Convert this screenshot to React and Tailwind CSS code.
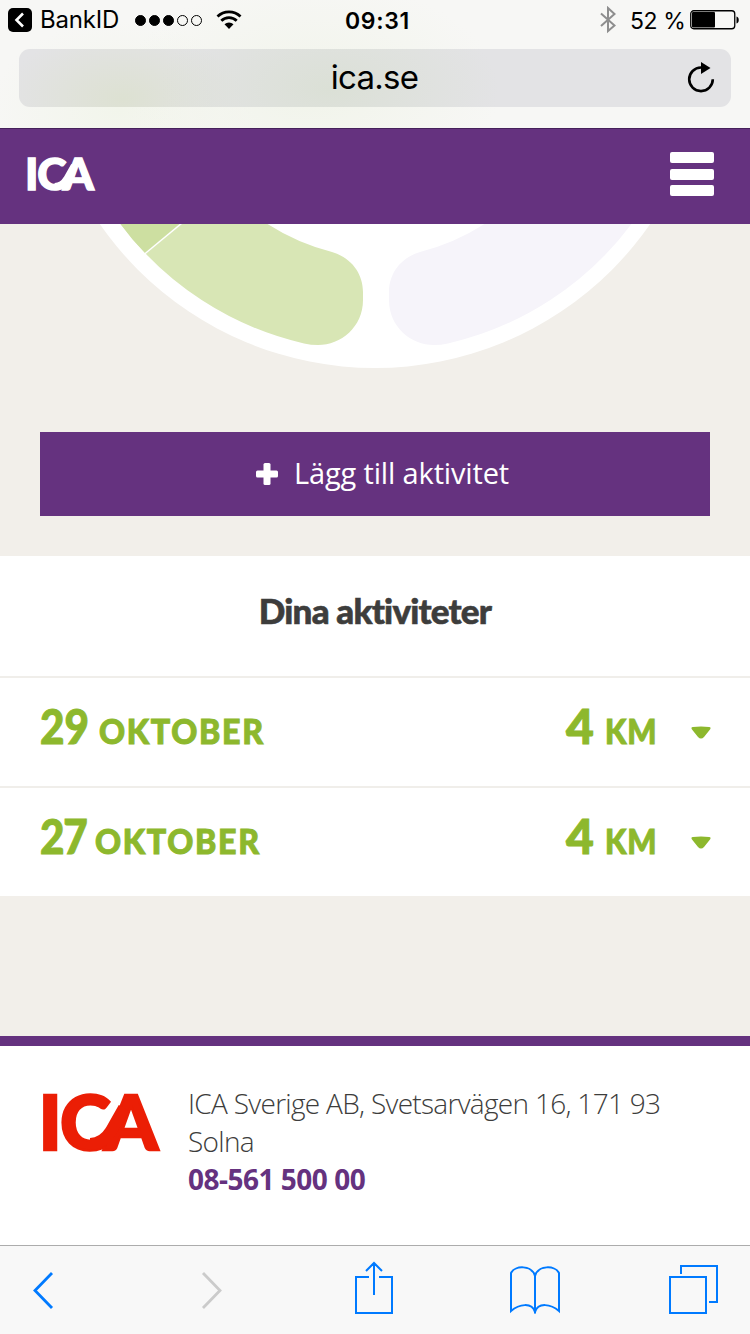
import { clsx } from "clsx"

const activities = [
  { id: 1, day: "29", month: "OKTOBER", distance: "4", unit: "KM" },
  { id: 2, day: "27", month: "OKTOBER", distance: "4", unit: "KM" },
]

export default function App() {
  return (
    <div className="flex h-[1334px] w-[750px] flex-col overflow-hidden bg-[#f2efea] font-['Open_Sans',sans-serif]">
      <BrowserTop />
      <SiteHeader />
      <main className="flex flex-1 flex-col">
        <ProgressRing />
        <div className="px-10 pt-16 pb-10">
          <button className="flex h-[84px] w-full items-center justify-center gap-4 bg-[#65327f] pl-[15px] text-white">
            <svg width="22" height="22" viewBox="0 0 22 22" fill="currentColor">
              <rect x="7.500" y="0" width="7" height="22" rx="1.500" />
              <rect x="0" y="7.500" width="22" height="7" rx="1.500" />
            </svg>
            <span className="pb-[3px] text-[29px] leading-none tracking-[-0.15px]">Lägg till aktivitet</span>
          </button>
        </div>
        <section className="bg-white">
          <h2 className="flex h-[120px] items-center justify-center pb-3 font-[Lato] text-[35px] leading-none font-black tracking-[-0.8px] text-[#3d3d3c] [-webkit-text-stroke:0.6px]">
            Dina aktiviteter
          </h2>
          {activities.map((a) => (
            <ActivityRow key={a.id} activity={a} />
          ))}
        </section>
      </main>
      <SiteFooter />
      <BrowserToolbar />
    </div>
  )
}

// ---------------------------- BROWSER ----------------------------
function BrowserTop() {
  return (
    <div className="h-32 shrink-0 bg-[#f7f7f5] bg-[radial-gradient(ellipse_190px_110px_at_310px_90px,#f1f4ea,transparent),radial-gradient(ellipse_130px_90px_at_120px_110px,#f2f5eb,transparent)] px-[19px] font-[Inter] text-black">
      <div className="-mx-[11px] flex h-[49px] items-start justify-between pt-2 pr-[2px]">
        <div className="flex h-6 items-center">
          <svg width="24" height="24" viewBox="0 0 24 24">
            <rect width="24" height="24" rx="5" />
            <path d="M15 5.500 8.500 12l6.500 6.500" fill="none" stroke="#fff" strokeWidth="2.600" />
          </svg>
          <span className="ml-2 w-[80px] text-[24px] leading-6 tracking-[-0.2px]">BankID</span>
          <div className="ml-[15px] flex gap-[3px]">
            {[1, 1, 1, 0, 0].map((on, i) => (
              <span key={i} className={clsx("size-[11px] rounded-full border border-black", on && "bg-black")} />
            ))}
          </div>
          <svg className="ml-[14px]" width="26" height="20" viewBox="0 0 26 20" fill="none" stroke="#000" strokeWidth="2.800">
            <path d="M1.500 6.500a16.500 16.500 0 0 1 23 0M5.300 10.800a11 11 0 0 1 15.400 0" />
            <path d="M8.500 14.200a6.500 6.500 0 0 1 9 0L13 19z" fill="#000" stroke="none" />
          </svg>
        </div>
        <span className="mr-[87px] text-[23px] leading-[26px] font-semibold tracking-[0.7px]">09:31</span>
        <div className="flex h-6 items-center">
          <svg width="16" height="28" viewBox="0 0 16 28" fill="none" stroke="#8e8e8e" strokeWidth="2">
            <path d="M1 7.500 14.500 19.500 8 25V2l6.500 6L1 20" />
          </svg>
          <span className="ml-[14px] w-[54px] pt-px text-[23px] leading-6 tracking-[-0.4px] whitespace-nowrap">52 %</span>
          <svg className="ml-[6px]" width="50" height="20" viewBox="0 0 50 20">
            <rect x="0.750" y="0.750" width="44" height="18" rx="3" fill="none" stroke="#000" strokeWidth="1.300" />
            <rect x="2" y="2" width="23" height="15.500" rx="1" />
            <path d="M46.500 6.500c3 .5 3 6.500 0 7z" />
          </svg>
        </div>
      </div>
      <div className="flex h-[58px] items-center rounded-[11px] bg-[#e3e3e5] bg-[radial-gradient(ellipse_170px_90px_at_310px_40px,#dbe0d6,transparent),radial-gradient(ellipse_120px_70px_at_104px_50px,#dde1d2,transparent)] pr-4">
        <span className="flex-1 pb-[2px] pl-[43px] text-center text-[33px] leading-none tracking-[-0.7px]">ica.se</span>
        <svg width="28" height="32" viewBox="0 0 28 32">
          <path d="M14 5.500A11.800 11.800 0 1 0 25.800 17.300" fill="none" stroke="#000" strokeWidth="2.600" />
          <path d="M14 0v12l9.500-6z" />
        </svg>
      </div>
    </div>
  )
}

function BrowserToolbar() {
  return (
    <nav className="flex h-[89px] shrink-0 items-start border-t border-[#acacac] bg-[#f8f8f8] pl-8 text-[#007aff]">
      <svg className="mt-[25px]" width="22" height="38" viewBox="0 0 22 38" fill="none" stroke="currentColor" strokeWidth="2.800">
        <path d="M20 2 3 19.500 20 37" />
      </svg>
      <svg className="mt-[25px] ml-[147px]" width="22" height="38" viewBox="0 0 22 38" fill="none" stroke="#cbcbcb" strokeWidth="2.800">
        <path d="M2 2 19 19.500 2 37" />
      </svg>
      <svg className="mt-[15px] ml-[132px]" width="38" height="54" viewBox="0 0 38 54" fill="none" stroke="currentColor" strokeWidth="2">
        <path d="M14 16H1v36h36V16H24M19 34V2M11 10l8-8 8 8" />
      </svg>
      <svg className="mt-5 ml-[117px]" width="50" height="48" viewBox="0 0 50 48" fill="none" stroke="currentColor" strokeWidth="2">
        <path d="M25 10C22-1 5-1 1 7v38c8-7 21-9 24 1 3-10 16-8 24-1V7C45-1 28-1 25 10v37" />
      </svg>
      <svg className="mt-[19px] ml-[109px]" width="50" height="50" viewBox="0 0 50 50" fill="none" stroke="currentColor" strokeWidth="2">
        <path d="M1 12h36v36H1zM12 9V1h36v36h-8" />
      </svg>
    </nav>
  )
}

// ---------------------------- SITE ----------------------------
function SiteHeader() {
  return (
    <header className="flex h-24 shrink-0 items-center justify-between border-t border-[#45215a] bg-[#65327f] pr-9 pb-[5px] pl-[27px] text-white">
      <Logo className="h-[34px] w-[68px]" />
      <button className="flex flex-col gap-[5.5px]">
        <span className="h-[11px] w-11 rounded-[2px] bg-white" />
        <span className="h-[11px] w-11 rounded-[2px] bg-white" />
        <span className="h-[11px] w-11 rounded-[2px] bg-white" />
      </button>
    </header>
  )
}

function Logo({ className }) {
  return (
    <svg className={clsx("overflow-visible", className)} viewBox="0 0 118 59" fill="currentColor" stroke="currentColor">
      <text x="-3.500 18 62" y="56.500" fontFamily="Lato" fontWeight="900" fontSize="77" strokeWidth="2.500">
        ICA
      </text>
      {/* ribbon joining the last two letters */}
      <path d="M48 51C58 51 64 46 69 38L82 15" fill="none" strokeWidth="12" />
    </svg>
  )
}

function ProgressRing() {
  const segment =
    "M120.500 0H267.500A221 221 0 0 0 332 28C352 34 363 50 363 68V76C363 103 341 121 318 121Q311 121 304 119.500A318.500 318.500 0 0 1 120.500 0Z"

  return (
    <svg className="block shrink-0" width="750" height="144" viewBox="0 0 750 144">
      <circle cx="375" cy="-191" r="335" fill="#fff" />
      <path d={segment} fill="#d8e6b5" />
      <path d="M120.500 0H181L145.500 29.500Q132 16 120.500 0Z" fill="#cddfa1" />
      <path d="M144 30.500 182-1" stroke="#fff" strokeWidth="1.500" />
      <path d={segment} fill="#f6f4fa" transform="matrix(-1 0 0 1 752 0)" />
    </svg>
  )
}

function ActivityRow({ activity }) {
  return (
    <div className="flex h-[110px] items-center border-t-2 border-[#f0eeea] pr-[39px] pl-10 font-[Lato] leading-none font-black whitespace-nowrap text-[#8db82d] [-webkit-text-stroke:1px]">
      <div className="flex flex-1 items-baseline gap-[11px] pb-3">
        <span
          className={clsx(
            "origin-left scale-x-[0.88] text-[48px]",
            activity.day === "27" ? "w-[44px] tracking-[-1.5px]" : "w-[48px]"
          )}
        >
          {activity.day}
        </span>
        <span className="origin-left scale-x-[0.92] text-[35px] tracking-[1.8px]">{activity.month}</span>
      </div>
      <div className="flex items-baseline pb-3">
        <span className="w-[39px] text-[48px]">{activity.distance}</span>
        <span className="w-[52px] origin-left scale-x-[0.88] text-[35px] tracking-[1px]">{activity.unit}</span>
      </div>
      <svg className="ml-[34px]" width="20" height="13" viewBox="0 0 20 13" fill="currentColor">
        <path d="M2 1Q10 0 18 1 20.500 1.200 19 3.500L13 11Q10 14 7 11L1 3.500Q-.5 1.200 2 1Z" />
      </svg>
    </div>
  )
}

function SiteFooter() {
  return (
    <footer className="flex h-[209px] shrink-0 items-start border-t-[10px] border-[#65327f] bg-white pt-[47px] pl-[42px]">
      <Logo className="h-[59px] w-[118px] text-[#eb1e05]" />
      <address className="-mt-[9px] ml-7 w-[490px] text-[28px] leading-[38px] font-light tracking-[-0.7px] text-[#3d3d3c] not-italic">
        ICA Sverige AB, Svetsarvägen 16, 171 93 Solna
        <a className="block font-bold tracking-[-0.5px] text-[#65327f]">08-561 500 00</a>
      </address>
    </footer>
  )
}
